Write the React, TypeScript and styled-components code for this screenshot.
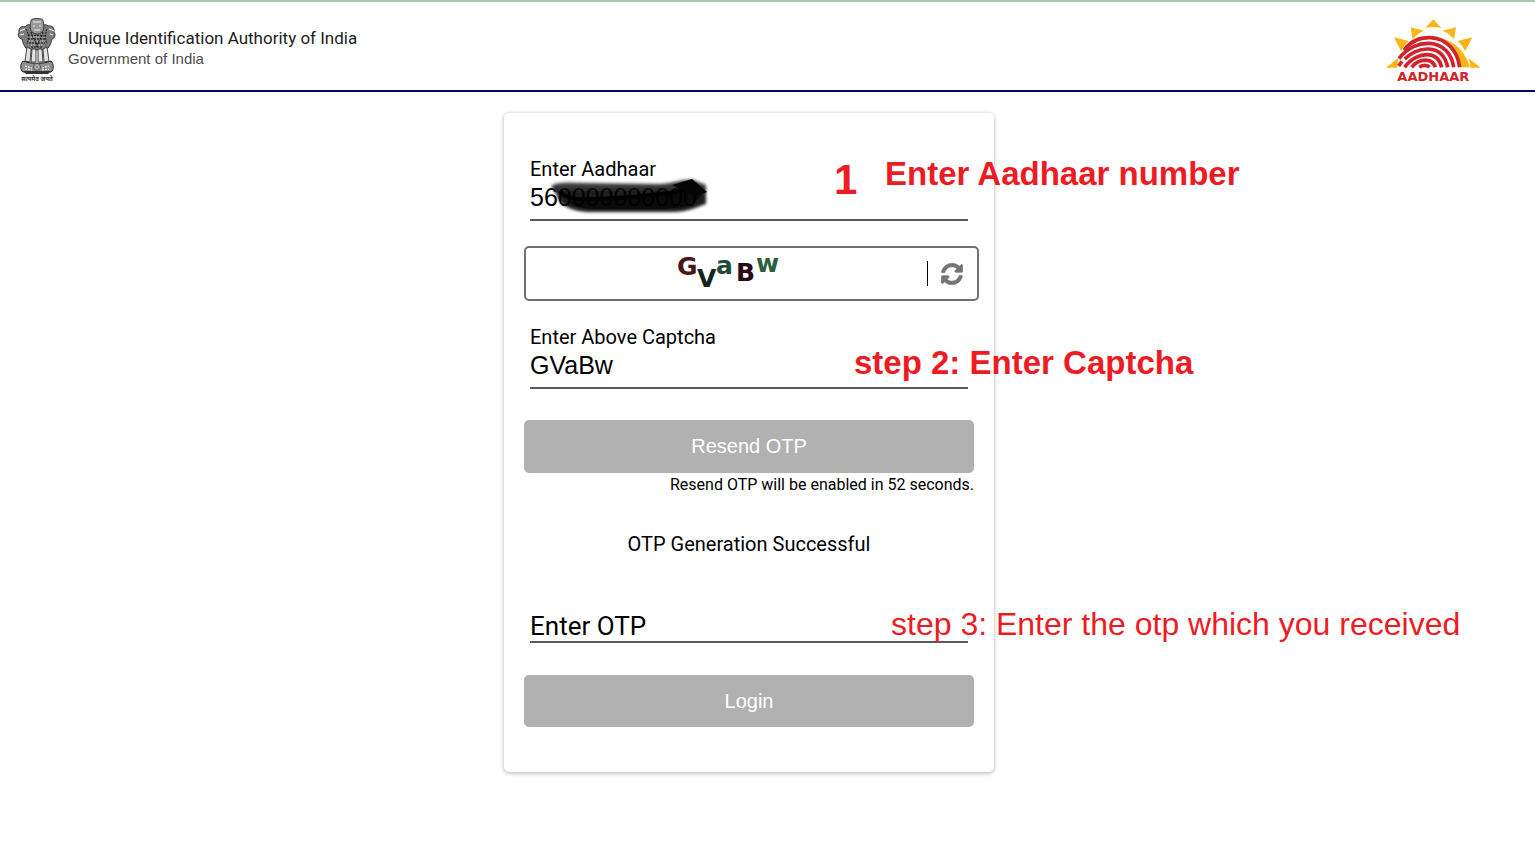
import React from "react";
import styled, { createGlobalStyle } from "styled-components";
import { FaSyncAlt } from "react-icons/fa";

const GlobalStyle = createGlobalStyle`
  *, *::before, *::after { box-sizing: border-box; }
  body {
    margin: 0;
    background: #fff;
    color: #000;
    font-family: Roboto, "Liberation Sans", sans-serif;
  }
`;

const Header = styled.header`
  display: flex;
  align-items: center;
  justify-content: space-between;
  height: 92px;
  padding: 10px 55px 0 16px;
  border-top: 2px solid #a3cca6;
  border-bottom: 2px solid #000b50;
`;

const Brand = styled.div`
  display: flex;
  align-items: center;
  gap: 10px;
`;

const BrandText = styled.div`
  padding-bottom: 4px;
`;

const BrandName = styled.div`
  font-family: Roboto, "Liberation Sans", sans-serif;
  font-size: 17px;
  line-height: 20px;
  color: #1c1c1c;
`;

const BrandSub = styled.div`
  font-family: "Liberation Sans", Arial, sans-serif;
  font-size: 15px;
  line-height: 22px;
  color: #4c4c4c;
`;

const Main = styled.main`
  display: flex;
  justify-content: center;
  padding: 21px 37px 40px 0;
`;

const Card = styled.form`
  display: flex;
  flex-direction: column;
  width: 490px;
  padding: 44px 20px 45px;
  border-radius: 5px;
  box-shadow: 0 1px 4px rgba(0, 0, 0, 0.32);
`;

const Field = styled.div<{ $top?: number }>`
  position: relative;
  display: flex;
  flex-direction: column;
  margin: ${(p) => p.$top ?? 0}px 6px 0;
`;

const Label = styled.label`
  font-size: 20px;
  line-height: 24px;
`;

const Input = styled.input<{ $compact?: boolean }>`
  width: 100%;
  height: ${(p) => (p.$compact ? 34 : 40)}px;
  padding: ${(p) => (p.$compact ? "2px 0 0" : "0 0 6px")};
  border: 0;
  border-bottom: 2px solid #5d5a5c;
  border-radius: 0;
  outline: 0;
  background: transparent;
  color: #000;
  font-family: "Liberation Sans", Arial, sans-serif;
  font-size: 25px;

  &::placeholder {
    color: #000;
    opacity: 1;
    font-family: Roboto, sans-serif;
    font-size: 26px;
  }
`;

const Scribble = styled.svg`
  position: absolute;
  left: 16px;
  top: 20px;
  pointer-events: none;
`;

const CaptchaBox = styled.div`
  display: flex;
  align-items: center;
  height: 55px;
  margin: 25px -5px 0 0;
  padding: 0 14px 0 0;
  border: 2px solid #707070;
  border-radius: 5px;
`;

const CaptchaImage = styled.div`
  display: flex;
  flex: 1;
  justify-content: center;
`;

const Divider = styled.span`
  width: 1px;
  height: 25px;
  margin-right: 13px;
  background: #000;
`;

const Refresh = styled.button`
  display: flex;
  padding: 0;
  border: 0;
  background: none;
  color: #757575;
  font-size: 22px;
`;

const Button = styled.button<{ $top: number; $height: number }>`
  height: ${(p) => p.$height}px;
  margin-top: ${(p) => p.$top}px;
  border: 0;
  border-radius: 5px;
  background: #b1b1b1;
  color: #fff;
  font-family: "Liberation Sans", Arial, sans-serif;
  font-size: 20px;
`;

const Timer = styled.p`
  margin: 0;
  font-size: 16px;
  line-height: 24px;
  text-align: right;
`;

const Status = styled.p`
  margin: 35px 0 0;
  font-size: 20px;
  line-height: 24px;
  text-align: center;
`;

const Note = styled.span<{ $left: number; $top: number; $size?: number; $light?: boolean }>`
  position: absolute;
  left: ${(p) => p.$left}px;
  top: ${(p) => p.$top}px;
  font-family: "Liberation Sans", Arial, sans-serif;
  font-size: ${(p) => p.$size ?? 33}px;
  font-weight: ${(p) => (p.$light ? 400 : 700)};
  line-height: 40px;
  white-space: nowrap;
  color: #ed1c24;
  pointer-events: none;
`;

const Emblem = () => (
  <svg width="42" height="68" viewBox="0 0 42 68" role="img" aria-label="State Emblem of India">
    <g fill="#7c7c7c" stroke="#222" strokeWidth="0.8">
      <path d="M9 10 C5 8 2 12 3 16 C1 18 3 22 6 22 C7 27 9 31 12 33 L30 33 C33 31 35 27 36 22 C39 21 40 18 38 15 C39 11 36 8 32 9 C29 6 26 9 26 9 L15 9 C14 7 11 7 9 10 Z" />
      <path d="M15 3 C16 1 26 1 27 3 L28 9 C28 14 25 17 21 17 C17 17 14 14 14 9 Z" fill="#999" />
    </g>
    <g fill="none" stroke="#f0f0f0" strokeWidth="1.1">
      <path d="M4 14 L9 12 M4 18 L8 17 M33 12 L38 14 M34 17 L37 18 M17 5 L25 5 M17 9 L19 9 M23 9 L25 9 M18 13 L24 13" />
      <path d="M12 20 L30 20 M13 24 L29 24 M15 28 L27 28" strokeDasharray="1 1.6" />
    </g>
    <g fill="none" stroke="#161616" strokeWidth="1" strokeDasharray="2 1">
      <path d="M10 12 C13 17 13 22 11 27 M31 12 C29 17 29 22 31 27 M15 15 C16 21 20 23 21 30 M27 15 C26 21 22 23 21 30 M12 18 L29 19 M12 22 L30 22 M13 26 L29 26 M15 30 L27 30" />
    </g>
    <g fill="#e2e2e2" stroke="#333" strokeWidth="0.9">
      <path d="M11 30 L9 44 L14 45 L15 32 Z" />
      <path d="M16 32 L15 45 L20 45 L20 32 Z" />
      <path d="M22 32 L22 45 L27 45 L26 32 Z" />
      <path d="M27 32 L28 45 L33 44 L31 30 Z" />
    </g>
    <path d="M7 44 C4 47 4 53 7 55 L35 55 C38 53 38 47 35 44 C29 47 13 47 7 44 Z" fill="#909090" stroke="#222" />
    <circle cx="21" cy="50" r="3.4" fill="#ddd" stroke="#444" />
    <path d="M21 47 V53 M18 50 H24 M19 48 L23 52 M23 48 L19 52" stroke="#555" strokeWidth="0.5" />
    <path d="M9 49 L16 51 M26 51 L33 49 M9 52 L16 53 M26 53 L33 52" stroke="#eee" strokeWidth="1.2" strokeDasharray="2 1" />
    <path d="M7 54 L35 54 L32 57 L10 57 Z" fill="#333" />
    <text x="21" y="64" textAnchor="middle" fontSize="6" fontWeight="700" fill="#333" fontFamily="'Noto Sans', sans-serif">सत्यमेव जयते</text>
  </svg>
);

const AadhaarLogo = () => (
  <svg width="94" height="70" viewBox="28 18 282 210" role="img" aria-label="Aadhaar">
    <g fill="#fdb515">
      <path d="M170 28 L194 54 Q170 48 146 54 Z" />
      <path d="M102 52 L142 62 Q122 70 108 88 Z" />
      <path d="M238 52 L197 62 Q218 70 232 88 Z" />
      <path d="M52 82 L96 93 Q81 106 73 124 Z" />
      <path d="M287 82 L243 93 Q258 106 266 124 Z" />
      <path d="M28 173 L64 145 L62 173 Z" />
      <path d="M312 173 L276 145 L282 173 Z" />
      <path d="M190 83 C238 94 268 130 280 172 L254 172 C248 130 226 100 190 83 Z" />
    </g>
    <g fill="none" stroke="#d2232a" strokeWidth="11">
      <path d="M82 120 C102 94 132 82 160 83 C212 85 243 124 249 172" />
      <path d="M67 146 C92 112 128 99 158 100 C200 102 225 132 231 172" />
      <path d="M66 168 L76 154" />
      <path d="M84 147 C106 126 132 116 156 117 C190 119 207 142 213 172" />
      <path d="M84 172 C102 146 130 133 154 134 C178 136 190 150 195 172" />
      <path d="M105 172 C118 156 136 149 152 151 C168 153 173 162 176 172" />
      <path d="M128 172 C136 164 152 164 158 172" />
    </g>
    <text x="170" y="212" textAnchor="middle" fontSize="39" fontWeight="700" fill="#d2232a" fontFamily="'DejaVu Sans', sans-serif">AADHAAR</text>
  </svg>
);

const captchaLetters = [
  { char: "G", x: 4, y: 23, color: "#4a1418" },
  { char: "V", x: 24, y: 35, color: "#10251f" },
  { char: "a", x: 43, y: 22, color: "#1f4a38" },
  { char: "B", x: 63, y: 29, color: "#2a0814" },
  { char: "w", x: 83, y: 20, color: "#2c6039" },
];

export default function App() {
  return (
    <>
      <GlobalStyle />
      <Header>
        <Brand>
          <Emblem />
          <BrandText>
            <BrandName>Unique Identification Authority of India</BrandName>
            <BrandSub>Government of India</BrandSub>
          </BrandText>
        </Brand>
        <AadhaarLogo />
      </Header>
      <Main>
        <Card onSubmit={(e) => e.preventDefault()}>
          <Field>
            <Label htmlFor="aadhaar">Enter Aadhaar</Label>
            <Input id="aadhaar" defaultValue="560000000000" />
            <Scribble width="166" height="42" viewBox="0 0 166 42" aria-hidden="true">
              <defs>
                <filter id="smudge" x="-10%" y="-20%" width="120%" height="140%">
                  <feGaussianBlur stdDeviation="1.5" />
                </filter>
                <linearGradient id="ink" x1="0" x2="0" y1="0" y2="1">
                  <stop offset="0" stopColor="#333" stopOpacity="0.85" />
                  <stop offset="0.4" stopColor="#000" stopOpacity="0.88" />
                  <stop offset="1" stopColor="#000" stopOpacity="0.9" />
                </linearGradient>
              </defs>
              <path d="M5 9 C12 4 24 6 40 6 L112 7 C128 7 136 1 148 3 L160 8 L160 27 C150 30 146 34 128 35 L42 35 C26 34 18 30 13 23 C11 17 8 14 5 9 Z" fill="url(#ink)" filter="url(#smudge)" />
              <path d="M22 24 C50 26 90 20 124 18 L148 14 L156 18 C146 30 136 31 116 32 L50 32 C34 32 26 28 22 24 Z" fill="#000" fillOpacity="0.6" />
              <path d="M14 14 C20 22 30 23 48 22 C80 21 116 18 146 12" fill="none" stroke="#000" strokeWidth="4" />
              <path d="M126 8 L146 2 L161 15 L148 20 Z" fill="#050505" />
            </Scribble>
            <Note $left={304} $top={3} $size={42}>1</Note>
            <Note $left={355} $top={-3}>Enter Aadhaar number</Note>
          </Field>

          <CaptchaBox>
            <CaptchaImage>
              <svg width="108" height="44" viewBox="0 0 108 44" role="img" aria-label="Captcha">
                {captchaLetters.map((l) => (
                  <text key={l.char} x={l.x} y={l.y} fill={l.color} fontSize="25" fontWeight="700" fontFamily="'DejaVu Sans', sans-serif">
                    {l.char}
                  </text>
                ))}
              </svg>
            </CaptchaImage>
            <Divider />
            <Refresh type="button" aria-label="Refresh captcha">
              <FaSyncAlt stroke="currentColor" strokeWidth={16} />
            </Refresh>
          </CaptchaBox>

          <Field $top={24}>
            <Label htmlFor="captcha">Enter Above Captcha</Label>
            <Input id="captcha" defaultValue="GVaBw" />
            <Note $left={324} $top={18}>step 2: Enter Captcha</Note>
          </Field>

          <Button type="button" $top={31} $height={53}>Resend OTP</Button>
          <Timer>Resend OTP will be enabled in 52 seconds.</Timer>
          <Status>OTP Generation Successful</Status>

          <Field $top={53}>
            <Input id="otp" $compact aria-label="Enter OTP" placeholder="Enter OTP" />
            <Note $left={361} $top={-5} $size={32} $light>step 3: Enter the otp which you received</Note>
          </Field>

          <Button type="submit" $top={32} $height={52}>Login</Button>
        </Card>
      </Main>
    </>
  );
}
